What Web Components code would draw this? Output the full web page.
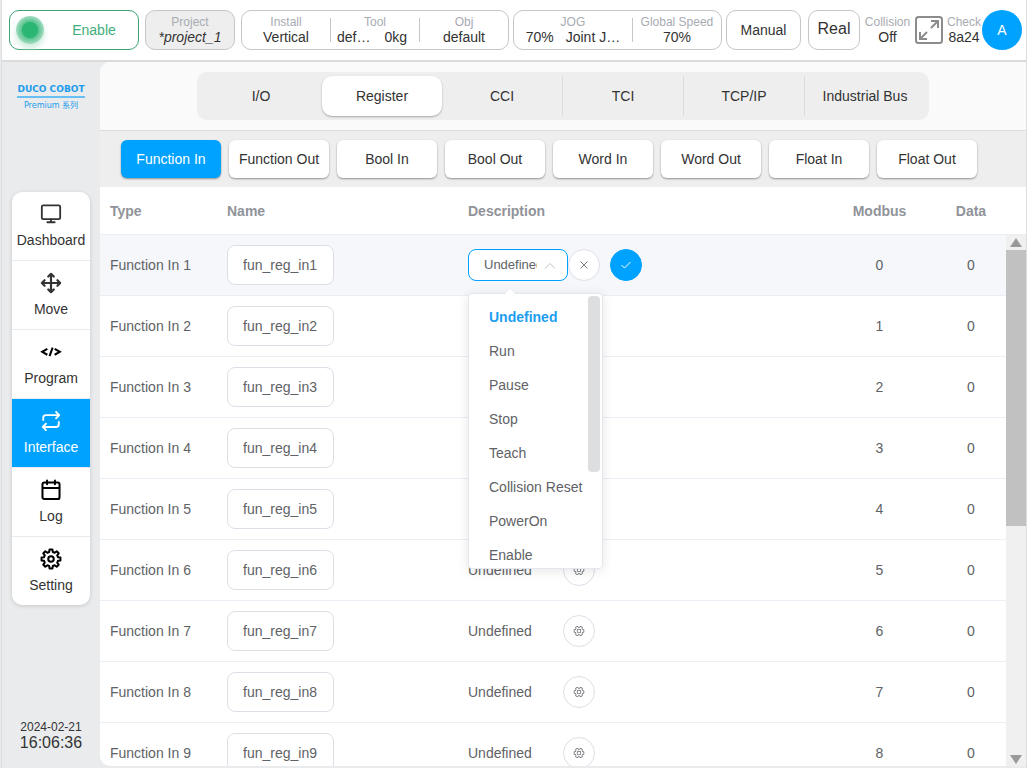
<!DOCTYPE html>
<html lang="en">
<head>
  <meta charset="UTF-8">
  <meta name="viewport" content="width=device-width, initial-scale=1">
  <title>DUCO COBOT</title>
  <style>
    body {
      --blue: #00a2ff;
      --green: #2bb673;
      --line: #ebeef5;
      --border: #dcdfe6;
      background: #e9ebed;
      color: #333;
      font: 14px/16px "Liberation Sans", "Noto Sans CJK SC", Arial, sans-serif;
      margin: 0;
    }
  </style>
</head>
<body>
  <cobot-app>
    <top-bar slot="header"></top-bar>
    <side-bar slot="side">
      <nav-item icon="monitor">Dashboard</nav-item>
      <nav-item icon="move">Move</nav-item>
      <nav-item icon="code">Program</nav-item>
      <nav-item icon="repeat" active>Interface</nav-item>
      <nav-item icon="calendar">Log</nav-item>
      <nav-item icon="gear">Setting</nav-item>
    </side-bar>
    <tab-group>
      <tab-item>I/O</tab-item>
      <tab-item active>Register</tab-item>
      <tab-item>CCI</tab-item>
      <tab-item line>TCI</tab-item>
      <tab-item line>TCP/IP</tab-item>
      <tab-item line>Industrial Bus</tab-item>
    </tab-group>
    <filter-bar>
      <filter-button active>Function In</filter-button>
      <filter-button>Function Out</filter-button>
      <filter-button>Bool In</filter-button>
      <filter-button>Bool Out</filter-button>
      <filter-button>Word In</filter-button>
      <filter-button>Word Out</filter-button>
      <filter-button>Float In</filter-button>
      <filter-button>Float Out</filter-button>
    </filter-bar>
    <register-table rows="9" editing="1"></register-table>
  </cobot-app>

  <script>
    // shared by every element
    const base = `
      *, :host { box-sizing: border-box; }
      button, input, select { font: inherit; color: inherit; margin: 0; }
      button { cursor: pointer; }
    `;

    const icons = {
      monitor: `<g fill="none" stroke="#333" stroke-width="2" stroke-linecap="round" stroke-linejoin="round"><rect x="2" y="2.5" width="20" height="15" rx="1.5"/><path d="M12 18v3M8 21h8"/></g>`,
      move: `<g fill="none" stroke="#333" stroke-width="2.4" stroke-linecap="round" stroke-linejoin="round"><path d="M5 9l-3 3 3 3M9 5l3-3 3 3M15 19l-3 3-3-3M19 9l3 3-3 3M2 12h20M12 2v20"/></g>`,
      code: `<g fill="none" stroke="#000" stroke-width="2.2"><path d="M8 8.6l-5.600 3.200L8 15M16 8.600l5.600 3.200L16 15M13.800 7.200l-3.400 9.400"/></g>`,
      repeat: `<g fill="none" stroke="#fff" stroke-width="2" stroke-linecap="round" stroke-linejoin="round"><path d="M17.500 2L21 5.500 17.500 9M3.500 11V8.500a3 3 0 0 1 3-3H21M6.500 22L3 18.500 6.500 15M20.500 13v2.500a3 3 0 0 1-3 3H3"/></g>`,
      calendar: `<g fill="none" stroke="#000" stroke-width="2.2" stroke-linecap="round" stroke-linejoin="round"><rect x="2.700" y="3.800" width="18.600" height="18" rx="2"/><path d="M7.700 1.700v4M16.300 1.700v4M3 9.700h18"/></g>`,
      gear: `<g fill="none" stroke="#000" stroke-width="2.2" stroke-linejoin="round"><circle cx="12" cy="12" r="3"/><path d="M19.600 10L22.300 10.400V13.600L19.600 14 18.800 16 20.400 18.200 18.200 20.400 16 18.800 14 19.600 13.600 22.300H10.400L10 19.600 8 18.800 5.800 20.400 3.600 18.200 5.200 16 4.400 14 1.700 13.600V10.400L4.400 10 5.200 8 3.600 5.800 5.800 3.600 8 5.200 10 4.400 10.400 1.700H13.600L14 4.400 16 5.200 18.200 3.600 20.400 5.800 18.800 8z"/></g>`,
    };

    const settingIcon = `<svg width="12" height="12" viewBox="0 0 1024 1024" fill="#606266"><path transform="rotate(90 512 512)" d="M600.704 64a32 32 0 0 1 30.464 22.208l35.2 109.376c14.784 7.232 28.928 15.36 42.432 24.512l112.384-24.192a32 32 0 0 1 34.432 15.36L944.32 364.8a32 32 0 0 1-4.032 37.504l-77.12 85.12a357.12 357.12 0 0 1 0 49.024l77.12 85.248a32 32 0 0 1 4.032 37.504l-88.704 153.6a32 32 0 0 1-34.432 15.296L708.8 803.904c-13.44 9.088-27.648 17.28-42.368 24.512l-35.264 109.376A32 32 0 0 1 600.704 960H423.296a32 32 0 0 1-30.464-22.208L357.696 828.48a351.616 351.616 0 0 1-42.56-24.64l-112.32 24.256a32 32 0 0 1-34.432-15.36L79.68 659.2a32 32 0 0 1 4.032-37.504l77.12-85.248a357.12 357.12 0 0 1 0-48.896l-77.12-85.248A32 32 0 0 1 79.68 364.8l88.704-153.6a32 32 0 0 1 34.432-15.296l112.32 24.256c13.568-9.152 27.776-17.408 42.56-24.64l35.2-109.312A32 32 0 0 1 423.232 64H600.64zm-23.424 64H446.72l-36.352 113.088-24.512 11.968a294.113 294.113 0 0 0-34.816 20.096l-22.656 15.36-116.224-25.088-65.28 113.152 79.68 88.192-1.92 27.136a293.12 293.12 0 0 0 0 40.192l1.92 27.136-79.808 88.192 65.344 113.152 116.224-25.024 22.656 15.296a294.113 294.113 0 0 0 34.816 20.096l24.512 11.968L446.72 896h130.688l36.48-113.152 24.448-11.904a288.282 288.282 0 0 0 34.752-20.096l22.592-15.296 116.288 25.024 65.28-113.152-79.744-88.192 1.92-27.136a293.12 293.12 0 0 0 0-40.256l-1.92-27.136 79.808-88.128-65.344-113.152-116.288 24.96-22.592-15.232a287.616 287.616 0 0 0-34.752-20.096l-24.448-11.904L577.344 128zM512 320a192 192 0 1 1 0 384 192 192 0 0 1 0-384zm0 64a128 128 0 1 0 0 256 128 128 0 0 0 0-256z"/></svg>`;

    class CobotApp extends HTMLElement {
      connectedCallback() {
        this.attachShadow({ mode: "open" }).innerHTML = `
          <slot name="header"></slot>
          <div class="body">
            <slot name="side"></slot>
            <main><slot></slot></main>
          </div>
          <style>
            ${base}
            :host {
              border-left: 1px solid #dcdee0;
              border-right: 1px solid #dcdee0;
              display: flex;
              flex-direction: column;
              height: 100vh;
              margin-left: 1px;
              overflow: hidden;
            }

            .body {
              display: flex;
              flex: 1;
              min-height: 0;
              padding-bottom: 2px;
            }

            main {
              background: #fff;
              border-radius: 10px 0 0 10px;
              display: flex;
              flex: 1;
              flex-direction: column;
              min-width: 0;
              overflow: hidden;
            }
          </style>
        `;
      }
    }

    class InfoField extends HTMLElement {
      connectedCallback() {
        this.attachShadow({ mode: "open" }).innerHTML = `
          <span class="label">${this.getAttribute("label")}</span>
          <span class="value"><slot></slot></span>
          <style>
            ${base}
            :host {
              display: flex;
              flex: 1;
              flex-direction: column;
              line-height: 15px;
              min-width: 0;
              text-align: center;
              white-space: nowrap;
            }

            .label {
              color: #a8abb2;
              font-size: 12px;
            }

            .value {
              display: flex;
              gap: 12px;
              justify-content: center;
            }

            :host(.tool) .value {
              gap: 14px;
              justify-content: flex-start;
              padding-left: 6px;
            }
          </style>
        `;
      }
    }

    class TopBar extends HTMLElement {
      connectedCallback() {
        this.attachShadow({ mode: "open" }).innerHTML = `
          <button class="box enable"><span class="lamp"></span><span class="text">Enable</span></button>
          <div class="box project"><info-field label="Project"><i>*project_1</i></info-field></div>
          <div class="box install">
            <info-field label="Install">Vertical</info-field>
            <hr>
            <info-field class="tool" label="Tool"><span>def…</span><span>0kg</span></info-field>
            <hr>
            <info-field label="Obj">default</info-field>
          </div>
          <div class="box jog">
            <info-field class="wide" label="JOG"><span>70%</span><span>Joint J…</span></info-field>
            <hr>
            <info-field label="Global Speed">70%</info-field>
          </div>
          <button class="box manual">Manual</button>
          <button class="box real">Real</button>
          <div class="tail">
            <info-field label="Collision">Off</info-field>
            <button class="full" aria-label="Full screen">
              <svg width="30" height="30" viewBox="0 0 30 30" fill="none" stroke="#8c8c8c" stroke-width="2">
                <rect x="2" y="2" width="26" height="26" rx="2.5"/>
                <path d="M17 6h7v7M24 6l-7 7M6 17v7h7M6 24l7-7"/>
              </svg>
            </button>
            <info-field class="check" label="Check">8a24</info-field>
            <button class="avatar">A</button>
          </div>
          <style>
            ${base}
            :host {
              background: #fff;
              border-bottom: 2px solid #dadbdc;
              display: flex;
              gap: 4px;
              height: 62px;
              padding: 10px 4px 10px 7px;
            }

            .box {
              align-items: center;
              background: #fff;
              border: 1px solid #c4c6c8;
              border-radius: 10px;
              display: flex;
              height: 40px;
              justify-content: center;
              padding: 0;
            }

            .box.enable {
              border-color: #3ba374;
              color: #3fae7b;
              flex: 130 1 130px;
              padding-left: 6px;
            }

            .lamp {
              background: radial-gradient(circle closest-side, var(--green) 54%, #5cc692 62%, #a4dcc1);
              border-radius: 50%;
              box-shadow: 0 4px 6px #c9ebdb;
              height: 28px;
              width: 28px;
            }

            .text {
              flex: 1;
              padding-left: 6px;
            }

            .project {
              background: #eee;
              flex: 90 1 90px;
              margin-left: 2px;
            }

            .install {
              flex: 268 1 268px;
              margin-left: 2px;
            }

            .jog { flex: 209 1 209px; }
            .wide { flex: 119 1 0; }
            .wide + hr + info-field { flex: 89 1 0; }
            .manual { flex: 75 1 75px; }

            .real {
              flex: 52 1 52px;
              font-size: 16px;
              margin-left: 3px;
              padding-bottom: 2px;
            }

            hr {
              border: 0;
              border-left: 1px solid #c4c6c8;
              height: 24px;
              margin: 0;
            }

            .tail {
              align-items: center;
              display: flex;
              flex: 158 1 158px;
              gap: 1px;
            }

            .full {
              background: none;
              border: 0;
              display: flex;
              justify-content: center;
              padding: 0;
              width: 34px;
            }

            .check { flex: 0 0 34px; }

            .avatar {
              background: var(--blue);
              border: 0;
              border-radius: 50%;
              color: #fff;
              height: 40px;
              padding: 0;
              width: 40px;
            }
          </style>
        `;
      }
    }

    class SideBar extends HTMLElement {
      connectedCallback() {
        this.attachShadow({ mode: "open" }).innerHTML = `
          <div class="logo">
            <span class="brand">DUCO COBOT</span>
            <span class="series">Premium 系列</span>
          </div>
          <nav><slot></slot></nav>
          <div class="clock"><span>2024-02-21</span><span class="time">16:06:36</span></div>
          <style>
            ${base}
            :host {
              display: flex;
              flex: 0 0 98px;
              flex-direction: column;
              padding: 20px 10px 16px;
            }

            .logo {
              align-items: center;
              color: #1c9ceb;
              display: flex;
              flex-direction: column;
              height: 110px;
            }

            .brand {
              border-bottom: 2px solid #68bff3;
              font: bold 9px/14px "DejaVu Sans", sans-serif;
              white-space: nowrap;
            }

            .series {
              font: 8px/16px "DejaVu Sans", "Noto Sans CJK SC", sans-serif;
              white-space: nowrap;
            }

            nav {
              background: #fff;
              border-radius: 10px;
              box-shadow: 0 1px 4px rgb(0,0,0,0.15);
              display: flex;
              flex-direction: column;
              gap: 1px;
              overflow: hidden;
            }

            .clock {
              display: flex;
              flex-direction: column;
              font-size: 12px;
              line-height: 15px;
              margin-top: auto;
              text-align: center;
            }

            .time { font-size: 16px; }
          </style>
        `;
      }
    }

    class NavItem extends HTMLElement {
      connectedCallback() {
        this.attachShadow({ mode: "open" }).innerHTML = `
          <a href="#">
            <svg width="22" height="22" viewBox="0 0 24 24">${icons[this.getAttribute("icon")]}</svg>
            <slot></slot>
          </a>
          <style>
            ${base}
            :host {
              box-shadow: 0 1px #e8eaec;
              display: block;
            }

            a {
              align-items: center;
              color: inherit;
              display: flex;
              flex-direction: column;
              gap: 7px;
              height: 68px;
              padding-top: 11px;
              text-decoration: none;
            }

            :host([active]) {
              background: var(--blue);
              color: #fff;
            }
          </style>
        `;
      }
    }

    class TabGroup extends HTMLElement {
      connectedCallback() {
        this.attachShadow({ mode: "open" }).innerHTML = `
          <div class="tabs" role="tablist"><slot></slot></div>
          <style>
            ${base}
            :host {
              background: #fafafa;
              border-bottom: 1px solid #dcdcdc;
              display: flex;
              justify-content: center;
              padding: 10px;
            }

            .tabs {
              background: #eee;
              border-radius: 10px;
              display: flex;
              padding: 4px;
            }
          </style>
        `;
      }
    }

    class TabItem extends HTMLElement {
      connectedCallback() {
        this.attachShadow({ mode: "open" }).innerHTML = `
          <button role="tab"><slot></slot></button>
          <style>
            ${base}
            :host { display: block; }
            :host([active]) { border-left: 1px solid transparent; }
            :host([line]) { border-left: 1px solid #dcdcdc; }

            button {
              background: none;
              border: 0;
              border-radius: 10px;
              height: 40px;
              padding: 0;
              width: 120px;
            }

            :host([active]) button {
              background: #fff;
              box-shadow: 0 1px 2px rgb(0,0,0,0.3);
            }
          </style>
        `;
      }
    }

    class FilterBar extends HTMLElement {
      connectedCallback() {
        this.attachShadow({ mode: "open" }).innerHTML = `
          <slot></slot>
          <style>
            ${base}
            :host {
              background: #eee;
              display: flex;
              gap: 8px;
              justify-content: center;
              padding: 9px 28px 9px 0;
            }
          </style>
        `;
      }
    }

    class FilterButton extends HTMLElement {
      connectedCallback() {
        this.attachShadow({ mode: "open" }).innerHTML = `
          <button><slot></slot></button>
          <style>
            ${base}
            :host { display: block; }

            button {
              background: #fff;
              border: 0;
              border-radius: 6px;
              box-shadow: 0 1px 2px rgb(0,0,0,0.4);
              display: block;
              height: 38px;
              padding: 0;
              width: 100px;
            }

            :host([active]) button {
              background: var(--blue);
              color: #fff;
            }
          </style>
        `;
      }
    }

    class RoundButton extends HTMLElement {
      connectedCallback() {
        const pics = {
          setting: settingIcon,
          close: `<svg width="12" height="12" viewBox="0 0 12 12" stroke="#7b7d82"><path d="M2.500 2.500l7 7M9.500 2.500l-7 7"/></svg>`,
          check: `<svg width="12" height="12" viewBox="0 0 12 12" fill="none" stroke="#fff"><path d="M1.500 6l3 3 6-6"/></svg>`,
        };
        const icon = this.getAttribute("icon");
        this.attachShadow({ mode: "open" }).innerHTML = `
          <button aria-label="${icon}">${pics[icon]}</button>
          <style>
            ${base}
            :host { display: block; }

            button {
              align-items: center;
              background: #fff;
              border: 1px solid var(--border);
              border-radius: 50%;
              display: flex;
              height: 32px;
              justify-content: center;
              padding: 0;
              width: 32px;
            }

            :host([icon="check"]) button {
              background: var(--blue);
              border-color: var(--blue);
            }
          </style>
        `;
      }
    }

    class FunctionSelect extends HTMLElement {
      connectedCallback() {
        const options = ["Undefined", "Run", "Pause", "Stop", "Teach", "Collision Reset", "PowerOn", "Enable"];
        this.attachShadow({ mode: "open" }).innerHTML = `
          <select aria-label="Description">${options.map((o) => `<option>${o}</option>`).join("")}</select>
          <svg class="arrow" width="12" height="8" viewBox="0 0 12 8" fill="none" stroke="#c0c4cc"><path d="M1 6.500l5-5 5 5"/></svg>
          <div class="popper">
            <ul role="listbox">${options.map((o) => `<li role="option">${o}</li>`).join("")}</ul>
            <div class="thumb"></div>
          </div>
          <style>
            ${base}
            :host {
              display: block;
              position: relative;
            }

            select {
              appearance: none;
              background: #fff;
              border: 1px solid var(--blue);
              border-radius: 8px;
              display: block;
              font-size: 13px;
              height: 32px;
              outline: none;
              padding: 0 30px 0 15px;
              width: 100px;
            }

            .arrow {
              position: absolute;
              right: 12px;
              top: 13px;
            }

            .popper {
              background: #fff;
              border: 1px solid #e4e7ed;
              border-radius: 4px;
              box-shadow: 0 2px 12px rgb(0,0,0,0.1);
              display: flex;
              height: 276px;
              left: 0;
              padding: 2px;
              position: absolute;
              top: 44px;
              z-index: 2;
            }

            .popper::before {
              border: 6px solid transparent;
              border-bottom-color: #fff;
              border-top: 0;
              content: "";
              left: 35px;
              position: absolute;
              top: -5px;
            }

            ul {
              list-style: none;
              margin: 0;
              overflow: hidden;
              padding: 4px 0 0 18px;
            }

            li {
              line-height: 34px;
              white-space: nowrap;
              width: 99px;
            }

            li:first-child {
              color: #1c9ef0;
              font-weight: bold;
            }

            .thumb {
              background: #dddee0;
              border-radius: 4px;
              height: 176px;
              width: 12px;
            }
          </style>
        `;
      }
    }

    class ScrollRail extends HTMLElement {
      connectedCallback() {
        this.attachShadow({ mode: "open" }).innerHTML = `
          <svg width="20" height="15" viewBox="0 0 20 15" fill="#999"><path d="M4 12l6-9 6 9z"/></svg>
          <div class="track"><div class="thumb"></div></div>
          <svg width="20" height="15" viewBox="0 0 20 15" fill="#999"><path d="M4 4l6 9 6-9z"/></svg>
          <style>
            ${base}
            :host {
              background: #f0f0f0;
              display: flex;
              flex-direction: column;
            }

            svg { display: block; }
            .track { flex: 1; }

            .thumb {
              background: #c1c1c1;
              height: 55%;
            }
          </style>
        `;
      }
    }

    class RegisterTable extends HTMLElement {
      connectedCallback() {
        const editing = parseInt(this.getAttribute("editing"));
        let rows = "";
        for (let i = 1; i <= parseInt(this.getAttribute("rows")); i++) {
          const description = i == editing
            ? `<function-select></function-select><round-button icon="close"></round-button><round-button class="ok" icon="check"></round-button>`
            : `<span>Undefined</span><round-button icon="setting"></round-button>`;
          // the open menu is four rows and a bit high
          const covered = i > editing && i <= editing + 4;
          rows += `
            <tr class="${i == editing ? "current" : ""}">
              <td>Function In ${i}</td>
              <td><input type="text" aria-label="Name ${i}" value="fun_reg_in${i}"></td>
              <td><div class="desc ${covered ? "covered" : ""}">${description}</div></td>
              <td class="num">${i - 1}</td>
              <td class="num">0</td>
            </tr>`;
        }
        this.attachShadow({ mode: "open" }).innerHTML = `
          <div class="view">
            <table>
              <thead>
                <tr>
                  <th class="type">Type</th>
                  <th class="name">Name</th>
                  <th>Description</th>
                  <th class="num modbus">Modbus</th>
                  <th class="num data">Data</th>
                </tr>
              </thead>
              <tbody>${rows}</tbody>
            </table>
          </div>
          <div class="side"><div class="corner"></div><scroll-rail></scroll-rail></div>
          <style>
            ${base}
            :host {
              color: #606266;
              display: flex;
              flex: 1;
              min-height: 0;
            }

            .view {
              flex: 1;
              overflow: hidden;
            }

            table {
              border-collapse: separate;
              border-spacing: 0;
              table-layout: fixed;
              width: 100%;
            }

            th, td {
              border-bottom: 1px solid var(--line);
              padding: 0 0 0 10px;
              text-align: left;
            }

            th {
              color: #909399;
              height: 48px;
            }

            td { height: 61px; }
            .type { width: 117px; }
            .name { width: 241px; }
            .modbus { width: 113px; }
            .data { width: 70px; }

            .num {
              padding: 0;
              text-align: center;
            }

            .current { background: #f5f7fb; }

            input {
              background: #fff;
              border: 1px solid var(--border);
              border-radius: 8px;
              display: block;
              height: 40px;
              padding: 0 15px;
              width: 107px;
            }

            .desc {
              align-items: center;
              display: flex;
            }

            .covered { visibility: hidden; }
            .desc > span { width: 95px; }
            .ok { margin-left: 10px; }

            .side {
              display: flex;
              flex: 0 0 20px;
              flex-direction: column;
            }

            .corner {
              border-bottom: 1px solid var(--line);
              height: 48px;
            }

            scroll-rail { flex: 1; }
          </style>
        `;
      }
    }

    customElements.define("info-field", InfoField);
    customElements.define("top-bar", TopBar);
    customElements.define("nav-item", NavItem);
    customElements.define("side-bar", SideBar);
    customElements.define("tab-item", TabItem);
    customElements.define("tab-group", TabGroup);
    customElements.define("filter-button", FilterButton);
    customElements.define("filter-bar", FilterBar);
    customElements.define("round-button", RoundButton);
    customElements.define("function-select", FunctionSelect);
    customElements.define("scroll-rail", ScrollRail);
    customElements.define("register-table", RegisterTable);
    customElements.define("cobot-app", CobotApp);
  </script>
</body>
</html>
